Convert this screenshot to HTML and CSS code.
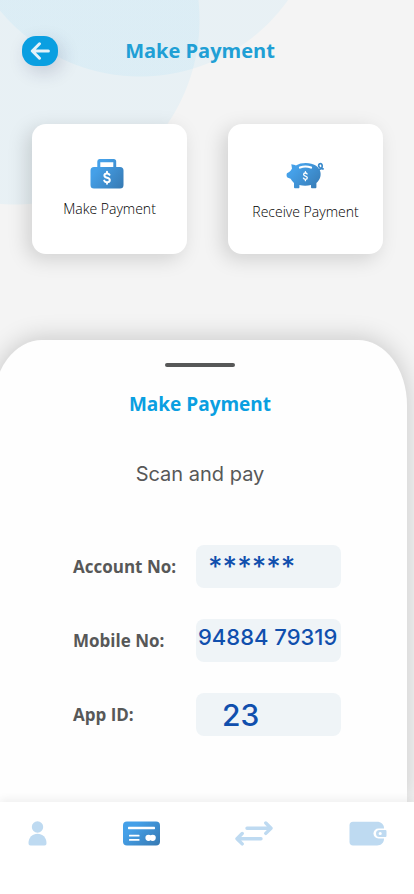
FILE: index.html
```html
<!DOCTYPE html>
<html lang="en">
<head>
<meta charset="utf-8">
<meta name="viewport" content="width=device-width, initial-scale=1">
<title>Make Payment</title>
<link rel="stylesheet" href="styles.css">
</head>
<body>
<div class="app">
  <header class="topbar">
    <button class="back" type="button" aria-label="Back">
      <svg width="20" height="18" viewBox="0 0 20 18" fill="none" stroke="#e4f2f9" stroke-width="3" stroke-linecap="round" stroke-linejoin="round"><path d="M9.5 1.8 2.3 9l7.2 7.2M2.8 9h15.6"/></svg>
    </button>
    <h1 class="title">Make Payment</h1>
  </header>

  <section class="cards">
    <button class="card" type="button">
      <svg width="40" height="30" viewBox="0 0 40 30">
        <defs><linearGradient id="blue" x1="0" y1="0.2" x2="1" y2="0.9"><stop offset="0.2" stop-color="#45a0e8"/><stop offset="1" stop-color="#377bb5"/></linearGradient></defs>
        <path fill="url(#blue)" fill-rule="evenodd" d="M9.500 0h14.200a2.500 2.500 0 0 1 2.500 2.500V8H30a3.500 3.500 0 0 1 3.500 3.500V26a3.500 3.500 0 0 1-3.500 3.500H4A3.500 3.500 0 0 1 .5 26V11.500A3.500 3.500 0 0 1 4 8h3.300V2.500A2.500 2.500 0 0 1 9.500 0Zm.8 3.200V8h13V3.200Z"/>
        <path fill="none" stroke="#fff" stroke-width="2" stroke-linecap="round" d="M19.500 15.800c-.5-1-1.400-1.400-2.500-1.400-1.600 0-2.600.8-2.600 2.100 0 3 5.400 1.500 5.400 4.500 0 1.400-1.100 2.200-2.700 2.200-1.400 0-2.400-.5-2.900-1.600M17 12.800v1.500M17 23.300v1.500"/>
      </svg>
      <span>Make Payment</span>
    </button>
    <button class="card card-receive" type="button">
      <svg width="40" height="27" viewBox="0 0 40 27">
        <path fill="url(#blue)" d="M5.300 2.200c1.800.1 3.500.6 4.600 1.400C12.600 1.700 16 1 19.800 1c8 0 13.600 3.800 14.600 9 .9 4.400-.9 8.300-4 11v4.300c0 .6-.3 1-.9 1h-3.600c-.6 0-.9-.4-.9-1v-2.200c-3.700 1-8 1-11.600 0v2.200c0 .6-.4 1-.9 1H8.900c-.6 0-.9-.4-.9-1V21c-1.400-1.200-2.400-2.600-3.400-4.200L1.400 15.400C.4 14.800.2 11.600 1.300 11c2.300-1 3.600-2.500 4.700-4.600Z"/>
        <path fill="none" stroke="#3c8acb" stroke-width="1.700" stroke-linecap="round" d="M32 7.800c3.200-.4 4.300-2.100 4.200-3.900-.1-1.600-1-2.300-1.900-2.200-1.500.1-2 1.500-1.400 2.900.6 1.500 2 2.500 4.200 2.200"/>
        <path fill="none" stroke="#fff" stroke-width="2.200" stroke-linecap="round" d="M14 5.500c3-1.100 8-1.100 11 0"/>
        <path fill="none" stroke="#fff" stroke-width="1.300" stroke-linecap="round" d="M21.100 12c-.3-.7-.9-1-1.700-1-1.100 0-1.800.6-1.800 1.500 0 2 3.700 1.200 3.700 3.200 0 1-.7 1.600-1.900 1.600-1 0-1.700-.4-2-1.200M19.400 9.700v1.200M19.400 17.500v1.200"/>
      </svg>
      <span>Receive Payment</span>
    </button>
  </section>

  <main class="sheet">
    <div class="handle"></div>
    <h2 class="sheet-title">Make Payment</h2>
    <p class="scan">Scan and pay</p>
    <form class="fields">
      <label for="account">Account No:</label>
      <input class="account" id="account" type="text" value="******">
      <label for="mobile">Mobile No:</label>
      <input class="mobile" id="mobile" type="text" value="94884 79319">
      <label for="appid">App ID:</label>
      <input class="appid" id="appid" type="text" value="23">
    </form>
  </main>

  <nav class="tabs">
    <a href="#profile" aria-label="Profile">
      <svg width="19" height="25" viewBox="0 0 19 25" fill="#bedaf1"><circle cx="9.500" cy="6" r="5.700"/><path d="M.5 22c0-5.500 4-9.300 9-9.300s9 3.800 9 9.300c0 1.700-.7 2.500-2 2.500h-14c-1.300 0-2-.8-2-2.500Z"/></svg>
    </a>
    <a href="#cards" aria-label="Cards">
      <svg width="37" height="25" viewBox="0 0 37 25"><rect y=".5" width="37" height="24" rx="4" fill="url(#blue)"/><g fill="#fff"><rect x="5" y="5.800" width="27" height="2.400" rx=".6"/><rect x="6" y="13.800" width="10.500" height="1.700" rx=".5"/><rect x="6" y="18" width="10.500" height="1.700" rx=".5"/><circle cx="25.500" cy="16.800" r="3.100"/><circle cx="29.700" cy="16.800" r="3.100"/></g></svg>
    </a>
    <a href="#transfer" aria-label="Transfer">
      <svg width="38" height="25" viewBox="0 0 38 25" fill="none" stroke="#bedaf1" stroke-width="3.400" stroke-linecap="round" stroke-linejoin="round"><path d="M12 7.200h23M30.800 2l5.200 5.200-5.200 5.200M26 17.700H3M7.200 12.500 2 17.700l5.200 5.200"/></svg>
    </a>
    <a href="#wallet" aria-label="Wallet">
      <svg width="38" height="25" viewBox="0 0 38 25"><path fill="#bedaf1" d="M4 .7h24c3.900 0 7 2.500 7 6.500v10.600c0 4-3 6.700-7 6.700H4c-2.200 0-3.500-1.300-3.500-3.500V4.200C.5 2 1.800.7 4 .7Z"/><path fill="#fff" d="M38 7.500h-8.500a5 5 0 0 0 0 10H38Z"/><path fill="#bedaf1" fill-rule="evenodd" d="M30.500 9H36c1 0 1.500.5 1.500 1.300v4.400c0 .8-.5 1.300-1.500 1.300h-5.500a3.500 3.500 0 0 1 0-7Zm.7 1.900a1.600 1.600 0 1 0 0 3.200 1.600 1.600 0 0 0 0-3.200Z"/></svg>
    </a>
  </nav>
</div>
</body>
</html>
```
FILE: styles.css
```css
* {
  box-sizing: border-box;
}

body {
  margin: 0;
  background: #f4f4f4;
  font-family: "Open Sans", "Noto Sans", sans-serif;
}

h1, h2, p {
  margin: 0;
}

button {
  border: 0;
  padding: 0;
  font-family: inherit;
  cursor: pointer;
}

.app {
  min-height: 100vh;
  display: flex;
  flex-direction: column;
  overflow: hidden;
  background:
    radial-gradient(circle 185px at 15px 20px, rgba(0, 175, 255, 0.05) 184px, transparent 185px),
    radial-gradient(circle 182px at 140px -105px, rgba(0, 175, 255, 0.05) 181px, transparent 182px);
}

.topbar {
  display: grid;
  grid-template-columns: 36px 1fr 36px;
  align-items: center;
  padding: 36px 36px 0 22px;
}

.back {
  display: flex;
  align-items: center;
  justify-content: center;
  width: 36px;
  height: 30px;
  border-radius: 14px;
  background: #0a9fe1;
  box-shadow: 4px 6px 18px rgba(40, 40, 90, 0.18);
}

.title,
.sheet-title {
  font-weight: 700;
  line-height: 30px;
  text-align: center;
}

.title {
  font-size: 20px;
  color: #209fd5;
}

.cards {
  display: flex;
  gap: 41px;
  padding: 58px 31px 86px 32px;
}

.card {
  flex: 1;
  height: 130px;
  display: flex;
  flex-direction: column;
  align-items: center;
  justify-content: flex-start;
  gap: 10px;
  padding-top: 35px;
  border-radius: 14px;
  background: #fff;
  box-shadow: -5px 5px 20px rgba(0, 0, 0, 0.15);
  font-size: 14px;
  font-weight: 300;
  line-height: 20px;
  color: #000;
}

.card-receive {
  padding-top: 38px;
  gap: 13px;
}

.card svg,
.tabs svg {
  display: block;
}

.sheet {
  flex: 1;
  width: 100%;
  margin-left: -7px;
  padding-bottom: 66px;
  border-radius: 49px 49px 0 0 / 65px 65px 0 0;
  background: #fefefe;
  box-shadow: 0 -2px 24px rgba(0, 0, 0, 0.18);
}

.handle {
  width: 70px;
  height: 4px;
  margin: 23px auto 0;
  border-radius: 2px;
  background: #575858;
}

.sheet-title {
  margin-top: 22px;
  font-size: 19px;
  color: #0a9fe1;
}

.scan {
  margin-top: 41px;
  font-family: Inter, sans-serif;
  font-size: 20px;
  line-height: 28px;
  text-align: center;
  color: #575858;
}

.fields {
  display: grid;
  grid-template-columns: 123px 1fr;
  align-items: center;
  row-gap: 31px;
  margin: 57px 66px 0 80px;
}

.fields label {
  font-size: 17px;
  font-weight: 700;
  line-height: 24px;
  white-space: nowrap;
  color: #575858;
}

.fields input {
  width: 100%;
  height: 43px;
  border: 0;
  border-radius: 8px;
  background: #eff4f7;
  font-family: Inter, sans-serif;
  font-weight: 500;
  color: #104fad;
}

.fields .account {
  padding: 0 12px;
  font-size: 28px;
}

.fields .mobile {
  padding: 0 0 8px 2px;
  font-size: 22px;
}

.fields .appid {
  padding: 0 26px;
  font-size: 30px;
}

.tabs {
  position: relative;
  display: flex;
  justify-content: space-between;
  height: 92px;
  padding: 19px 27px 0 28px;
  background: #fff;
  box-shadow: 0 -3px 8px rgba(0, 0, 0, 0.06);
}
```
